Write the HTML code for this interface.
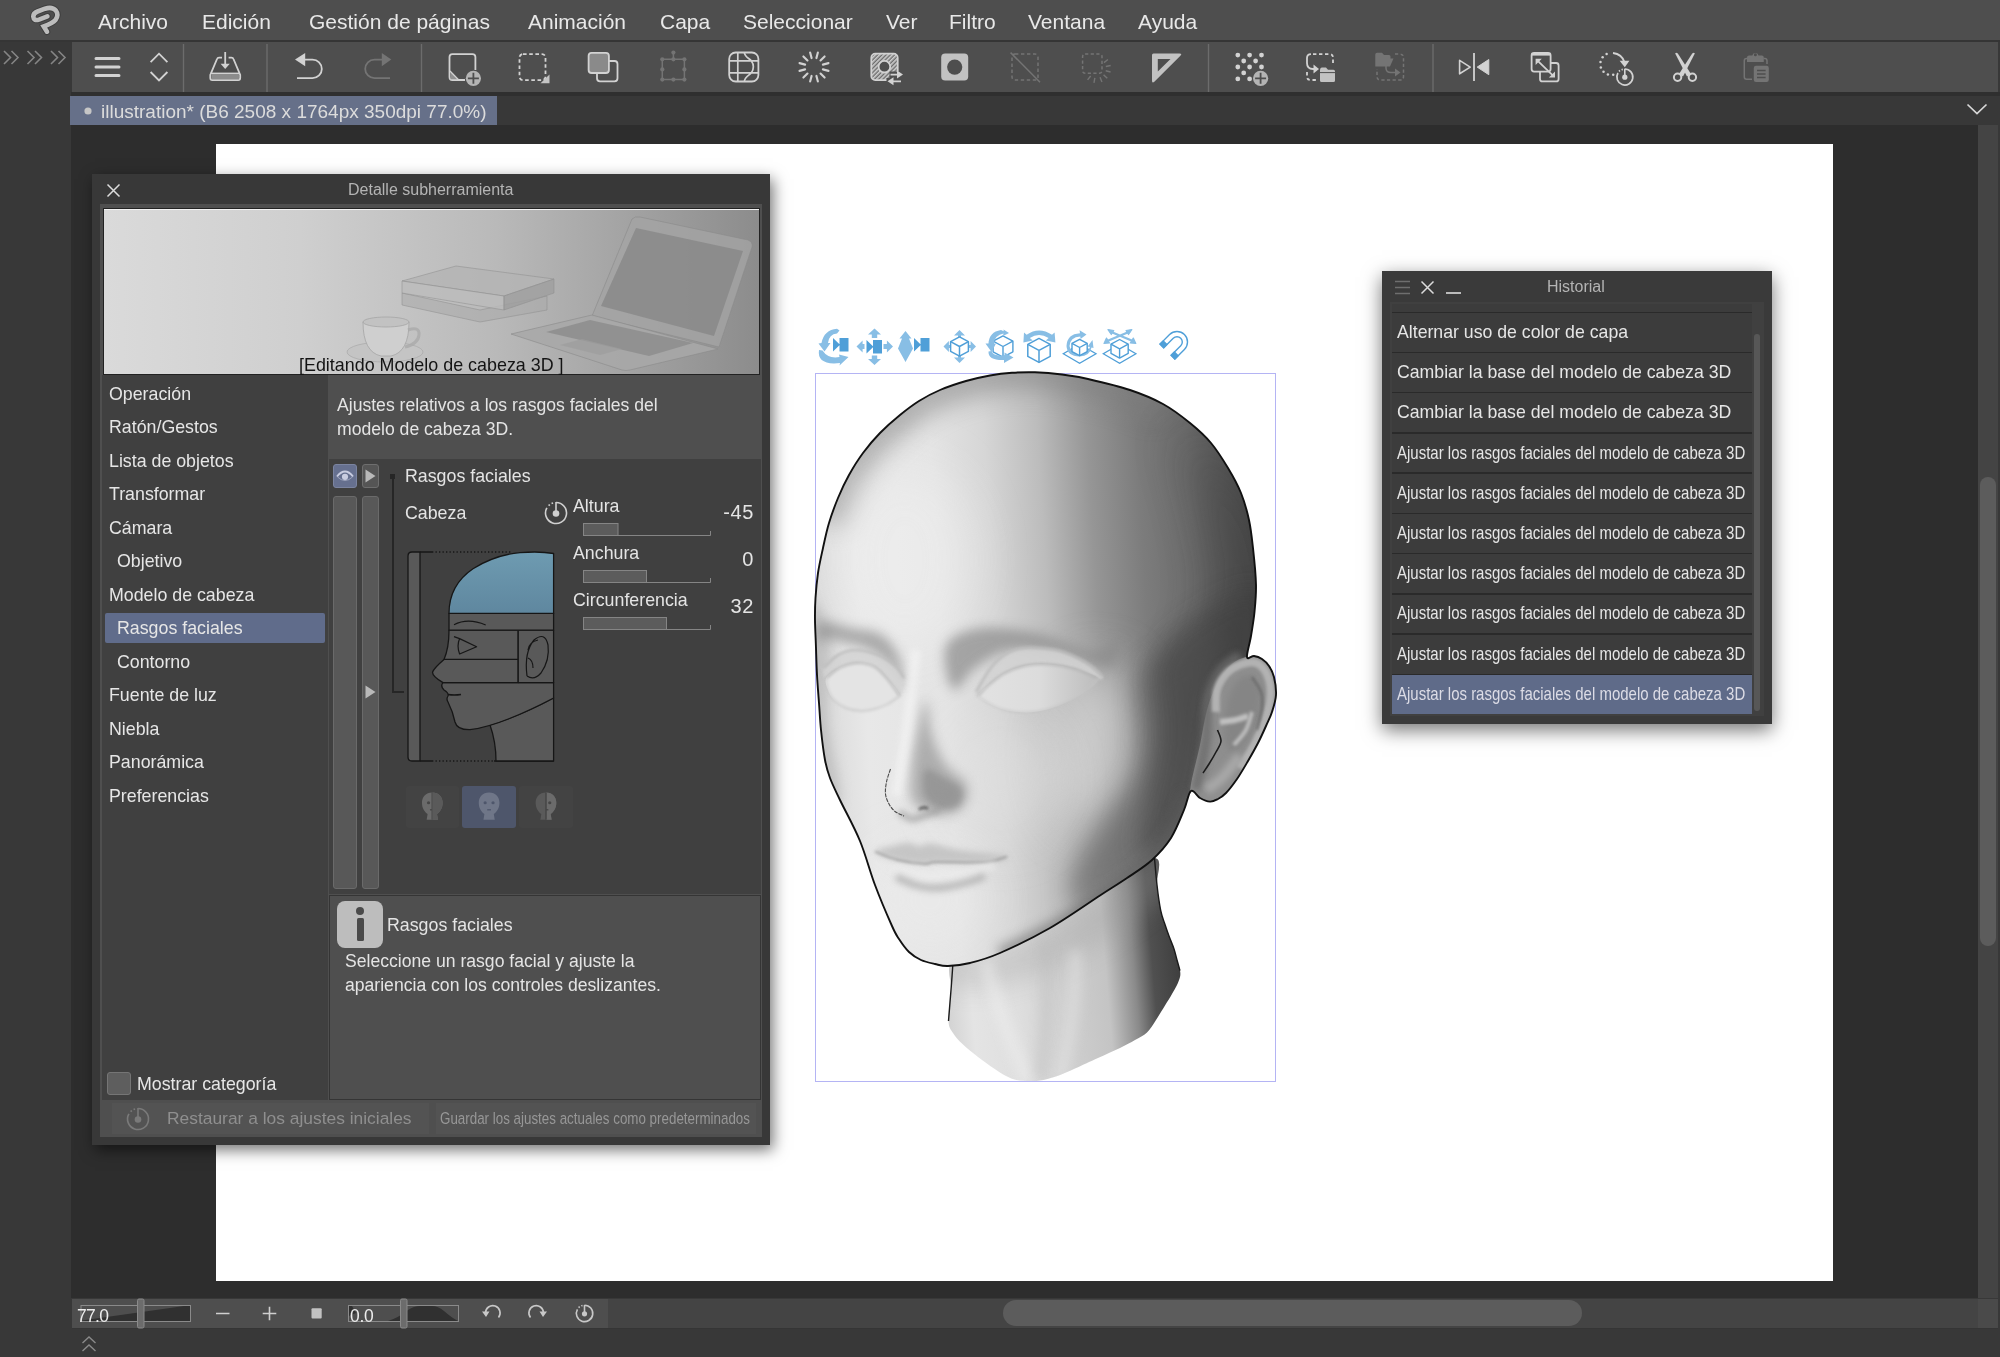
<!DOCTYPE html>
<html lang="es">
<head>
<meta charset="utf-8">
<title>illustration</title>
<style>
*{box-sizing:border-box;margin:0;padding:0}
html,body{width:2000px;height:1357px;overflow:hidden;background:#383838}
body{position:relative;will-change:transform;font-family:"Liberation Sans",sans-serif;color:#e4e4e4;-webkit-font-smoothing:antialiased}
.a{position:absolute}
.t{position:absolute;white-space:nowrap;line-height:1;transform:translateY(-50%)}
svg{position:absolute;overflow:visible}
/* ---- app chrome ---- */
#menubar{left:0;top:0;width:2000px;height:40px;background:#4e4e4e}
#menubar .t{font-size:21px;top:20.5px;color:#e8e8e8}
#menuline{left:0;top:40px;width:2000px;height:2px;background:#353535}
#leftcol{left:0;top:42px;width:71px;height:1315px;background:#383838}
#toolbar{left:72px;top:42px;width:1926px;height:50px;background:#4e4e4e}
#tabbar{left:71px;top:92px;width:1929px;height:33px;background:#383838}
#tab{left:70px;top:96px;width:427px;height:29px;background:#667089}
#tab .t{font-size:19px;color:#dcdcdc;left:31px;top:15px}
#work{left:71px;top:125px;width:1907px;height:1173px;background:#2d2d2d;overflow:hidden}
#paper{left:216px;top:144px;width:1617px;height:1137px;background:#fff}
#vscroll{left:1978px;top:125px;width:20px;height:1193px;background:#444}
#vthumb{left:1980px;top:477px;width:16px;height:469px;border-radius:8px;background:#5c5c5c}
#status{left:72px;top:1298px;width:1926px;height:31px;background:#444;border-top:1px solid #383838;border-bottom:1px solid #353535}
#navi{left:72px;top:1299px;width:536px;height:29px;background:#4e4e4e}
#hthumb{left:1003px;top:1300px;width:579px;height:26px;border-radius:13px;background:#5c5c5c}
#bottom{left:0;top:1329px;width:2000px;height:28px;background:#383838}
</style>
</head>
<body>
<!-- MENU BAR -->
<div id="menubar" class="a">
  <span class="t" style="left:98px">Archivo</span>
  <span class="t" style="left:202px">Edición</span>
  <span class="t" style="left:309px">Gestión de páginas</span>
  <span class="t" style="left:528px">Animación</span>
  <span class="t" style="left:660px">Capa</span>
  <span class="t" style="left:743px">Seleccionar</span>
  <span class="t" style="left:886px">Ver</span>
  <span class="t" style="left:949px">Filtro</span>
  <span class="t" style="left:1028px">Ventana</span>
  <span class="t" style="left:1138px">Ayuda</span>
</div>
<div id="menuline" class="a"></div>
<div id="leftcol" class="a"></div>
<div id="toolbar" class="a"></div>
<div id="tabbar" class="a"></div>
<div class="a" style="left:71px;top:92px;width:1929px;height:3.5px;background:#2f2f2f"></div>
<div id="tab" class="a"><span class="t">illustration* (B6 2508 x 1764px 350dpi 77.0%)</span></div>
<div id="work" class="a"></div>
<div id="paper" class="a"></div>
<div id="vscroll" class="a"></div>
<div id="vthumb" class="a"></div>
<div id="status" class="a"></div>
<div id="navi" class="a"></div>
<div id="hthumb" class="a"></div>
<div id="bottom" class="a"></div>
<div class="a" style="left:1978px;top:1299px;width:20px;height:29px;background:#4a4a4a"></div>
<!--HEAD-START-->
<!-- 3D HEAD -->
<div class="a" style="left:814.5px;top:372.5px;width:461.5px;height:709px;border:1px solid #b4b4f4"></div>
<svg style="left:0;top:0" width="1400" height="1100" viewBox="0 0 1400 1100">
<defs>
<clipPath id="hc"><path d="M1035.0 372.3C1043.3 372.6 1053.2 373.4 1062.0 374.5C1070.8 375.6 1076.7 376.4 1088.0 379.0C1099.3 381.6 1117.5 385.8 1130.0 390.0C1142.5 394.2 1153.0 398.5 1163.0 404.0C1173.0 409.5 1182.0 416.5 1190.0 423.0C1198.0 429.5 1204.7 435.5 1211.0 443.0C1217.3 450.5 1223.0 459.7 1228.0 468.0C1233.0 476.3 1237.5 484.3 1241.0 493.0C1244.5 501.7 1247.0 510.8 1249.0 520.0C1251.0 529.2 1251.8 537.2 1253.0 548.0C1254.2 558.8 1255.8 574.3 1256.0 585.0C1256.2 595.7 1255.3 603.5 1254.5 612.0C1253.7 620.5 1252.2 628.5 1251.0 636.0C1249.8 643.5 1246.5 653.7 1247.0 657.0C1247.5 660.3 1251.5 655.7 1254.0 656.0C1256.5 656.3 1259.5 657.3 1262.0 659.0C1264.5 660.7 1267.0 663.0 1269.0 666.0C1271.0 669.0 1272.8 672.2 1274.0 677.0C1275.2 681.8 1276.3 689.2 1276.0 695.0C1275.7 700.8 1273.7 706.8 1272.0 712.0C1270.3 717.2 1268.3 720.8 1266.0 726.0C1263.7 731.2 1261.0 737.2 1258.0 743.0C1255.0 748.8 1251.5 755.0 1248.0 761.0C1244.5 767.0 1240.7 773.7 1237.0 779.0C1233.3 784.3 1229.2 789.7 1226.0 793.0C1222.8 796.3 1220.7 797.6 1218.0 799.0C1215.3 800.4 1213.0 801.8 1210.0 801.6C1207.0 801.4 1203.2 799.8 1200.0 798.0C1196.8 796.2 1193.7 789.0 1191.0 791.0C1188.3 793.0 1187.3 802.2 1184.0 810.0C1180.7 817.8 1176.3 829.7 1171.0 838.0C1165.7 846.3 1159.3 853.3 1152.0 860.0C1144.7 866.7 1135.7 872.1 1127.0 878.0C1118.3 883.9 1112.8 887.2 1100.0 895.5C1087.2 903.8 1066.7 918.4 1050.0 928.0C1033.3 937.6 1013.3 947.2 1000.0 953.0C986.7 958.8 978.7 960.8 970.0 963.0C961.3 965.2 953.8 965.8 948.0 966.0C942.2 966.2 939.5 965.0 935.0 964.0C930.5 963.0 925.3 962.0 921.0 960.0C916.7 958.0 912.7 955.5 909.0 952.0C905.3 948.5 901.8 943.3 899.0 939.0C896.2 934.7 896.0 935.0 892.0 926.0C888.0 917.0 880.3 899.2 875.0 885.0C869.7 870.8 865.8 855.2 860.0 841.0C854.2 826.8 845.0 810.5 840.0 800.0C835.0 789.5 832.5 784.7 830.0 778.0C827.5 771.3 826.5 768.0 825.0 760.0C823.5 752.0 822.0 739.5 821.0 730.0C820.0 720.5 819.7 712.2 819.0 703.0C818.3 693.8 817.5 684.2 817.0 675.0C816.5 665.8 816.3 657.2 816.0 648.0C815.7 638.8 815.1 628.3 815.0 620.0C814.9 611.7 815.0 605.8 815.5 598.0C816.0 590.2 816.8 581.3 818.0 573.0C819.2 564.7 821.2 556.3 823.0 548.0C824.8 539.7 826.5 531.3 829.0 523.0C831.5 514.7 834.7 506.0 838.0 498.0C841.3 490.0 844.8 482.5 849.0 475.0C853.2 467.5 857.8 460.0 863.0 453.0C868.2 446.0 873.8 439.3 880.0 433.0C886.2 426.7 893.5 420.3 900.0 415.0C906.5 409.7 912.3 405.2 919.0 401.0C925.7 396.8 932.2 393.3 940.0 390.0C947.8 386.7 957.7 383.4 966.0 381.0C974.3 378.6 982.3 376.9 990.0 375.5C997.7 374.1 1004.5 373.3 1012.0 372.8C1019.5 372.3 1026.7 372.0 1035.0 372.3z"/></clipPath>
<clipPath id="nc"><path d="M953.0 960.0C944.8 968.3 951.8 979.8 951.0 990.0C950.2 1000.2 948.2 1013.8 948.5 1021.0C948.8 1028.2 950.7 1029.2 953.0 1033.0C955.3 1036.8 958.3 1040.0 962.5 1044.0C966.7 1048.0 972.8 1052.9 978.0 1057.0C983.2 1061.1 989.3 1065.3 994.0 1068.5C998.7 1071.7 1002.2 1074.1 1006.0 1076.0C1009.8 1077.9 1012.5 1079.2 1016.5 1080.0C1020.5 1080.8 1025.5 1081.0 1030.0 1081.0C1034.5 1081.0 1038.5 1081.0 1043.5 1080.0C1048.5 1079.0 1054.8 1076.9 1060.0 1075.0C1065.2 1073.1 1068.7 1071.3 1075.0 1068.5C1081.3 1065.7 1090.5 1061.4 1098.0 1058.0C1105.5 1054.6 1113.8 1051.0 1120.0 1048.0C1126.2 1045.0 1130.5 1042.6 1135.0 1040.0C1139.5 1037.4 1143.5 1035.8 1147.0 1032.5C1150.5 1029.2 1153.0 1024.5 1156.0 1020.0C1159.0 1015.5 1162.3 1009.8 1165.0 1005.5C1167.7 1001.2 1170.0 997.4 1172.0 994.0C1174.0 990.6 1175.7 987.8 1177.0 985.0C1178.3 982.2 1179.5 979.4 1180.0 977.0C1180.5 974.6 1180.5 973.4 1180.0 970.6C1179.5 967.8 1178.0 963.6 1177.0 960.0C1176.0 956.4 1175.3 953.0 1174.0 949.0C1172.7 945.0 1170.5 940.1 1169.0 936.0C1167.5 931.9 1166.4 928.8 1165.0 924.5C1163.6 920.2 1162.0 917.1 1160.7 910.5C1159.4 903.9 1158.0 893.8 1157.0 885.0C1156.0 876.2 1164.0 858.8 1154.5 858.0C1145.0 857.2 1125.8 866.3 1100.0 880.0C1074.2 893.7 1024.5 926.7 1000.0 940.0C975.5 953.3 961.2 951.7 953.0 960.0z"/></clipPath>
<filter id="b6" filterUnits="userSpaceOnUse" x="700" y="300" width="700" height="850"><feGaussianBlur stdDeviation="6"/></filter>
<filter id="b12" filterUnits="userSpaceOnUse" x="700" y="300" width="700" height="850"><feGaussianBlur stdDeviation="12"/></filter>
<filter id="b25" filterUnits="userSpaceOnUse" x="700" y="300" width="700" height="850"><feGaussianBlur stdDeviation="25"/></filter>
<filter id="b3" filterUnits="userSpaceOnUse" x="700" y="300" width="700" height="850"><feGaussianBlur stdDeviation="3"/></filter>
<filter id="b15" filterUnits="userSpaceOnUse" x="700" y="300" width="700" height="850"><feGaussianBlur stdDeviation="1.5"/></filter>
<linearGradient id="hg" gradientUnits="userSpaceOnUse" x1="818.5" y1="661" x2="1264.6" y2="633.7"><stop offset="0" stop-color="#dadada"/><stop offset=".1" stop-color="#e8e8e8"/><stop offset=".28" stop-color="#e4e4e4"/><stop offset=".4" stop-color="#d6d6d6"/><stop offset=".52" stop-color="#bcbcbc"/><stop offset=".63" stop-color="#969696"/><stop offset=".74" stop-color="#7c7c7c"/><stop offset=".85" stop-color="#6c6c6c"/><stop offset=".95" stop-color="#525252"/><stop offset="1" stop-color="#444"/></linearGradient>
<linearGradient id="ng" gradientUnits="userSpaceOnUse" x1="948" y1="1000" x2="1182" y2="980"><stop offset="0" stop-color="#d4d4d4"/><stop offset=".1" stop-color="#e4e4e4"/><stop offset=".3" stop-color="#dedede"/><stop offset=".5" stop-color="#cfcfcf"/><stop offset=".68" stop-color="#c4c4c4"/><stop offset=".8" stop-color="#8a8a8a"/><stop offset=".88" stop-color="#505050"/><stop offset="1" stop-color="#3e3e3e"/></linearGradient>
<linearGradient id="eg" gradientUnits="userSpaceOnUse" x1="980" y1="0" x2="1098" y2="0"><stop offset="0" stop-color="#e2e2e2"/><stop offset=".5" stop-color="#dcdcdc"/><stop offset="1" stop-color="#bcbcbc"/></linearGradient>
</defs>
<g clip-path="url(#nc)"><rect x="930" y="850" width="270" height="240" fill="url(#ng)"/>
<path d="M940.0 955.0C948.3 948.8 981.7 953.0 1000.0 948.0C1018.3 943.0 1033.3 934.2 1050.0 925.0C1066.7 915.8 1081.7 905.5 1100.0 893.0C1118.3 880.5 1145.0 853.8 1160.0 850.0C1175.0 846.2 1196.7 856.7 1190.0 870.0C1183.3 883.3 1141.7 914.2 1120.0 930.0C1098.3 945.8 1080.0 955.8 1060.0 965.0C1040.0 974.2 1018.3 981.7 1000.0 985.0C981.7 988.3 960.0 990.0 950.0 985.0C940.0 980.0 931.7 961.2 940.0 955.0z" fill="#9a9a9a" opacity=".3" filter="url(#b12)"/>
<path d="M985 960Q1000 1020 1030 1085" stroke="#f0f0f0" stroke-width="14" fill="none" opacity=".5" filter="url(#b6)"/>
<path d="M1075 950Q1078 1010 1060 1080" stroke="#e6e6e6" stroke-width="12" fill="none" opacity=".5" filter="url(#b6)"/>
<path d="M1045 940Q1050 1000 1040 1080" stroke="#b8b8b8" stroke-width="10" fill="none" opacity=".45" filter="url(#b6)"/>
</g>
<path d="M953.0 962.0C952.7 966.7 951.8 980.2 951.0 990.0C950.2 999.8 948.9 1015.8 948.5 1021.0" stroke="#1a1a1a" stroke-width="1.4" fill="none"/>
<path d="M1154.5 858.0C1154.9 862.5 1156.0 876.2 1157.0 885.0C1158.0 893.8 1159.4 903.9 1160.7 910.5C1162.0 917.1 1163.6 920.2 1165.0 924.5C1166.4 928.8 1167.5 931.9 1169.0 936.0C1170.5 940.1 1172.7 945.0 1174.0 949.0C1175.3 953.0 1176.0 956.4 1177.0 960.0C1178.0 963.6 1179.5 968.8 1180.0 970.6" stroke="#1a1a1a" stroke-width="1.4" fill="none"/>
<g clip-path="url(#hc)">
<rect x="800" y="360" width="500" height="620" fill="url(#hg)"/>
<path d="M829.0 523.0C830.5 518.8 834.7 506.0 838.0 498.0C841.3 490.0 844.8 482.5 849.0 475.0C853.2 467.5 857.8 460.0 863.0 453.0C868.2 446.0 873.8 439.3 880.0 433.0C886.2 426.7 893.5 420.3 900.0 415.0C906.5 409.7 912.3 405.2 919.0 401.0C925.7 396.8 932.2 393.3 940.0 390.0C947.8 386.7 957.7 383.4 966.0 381.0C974.3 378.6 982.3 376.9 990.0 375.5C997.7 374.1 1004.5 373.3 1012.0 372.8C1019.5 372.3 1026.7 372.0 1035.0 372.3C1043.3 372.6 1053.2 373.4 1062.0 374.5C1070.8 375.6 1076.7 376.4 1088.0 379.0C1099.3 381.6 1117.5 385.8 1130.0 390.0C1142.5 394.2 1157.5 401.7 1163.0 404.0" stroke="#7e7e7e" stroke-width="34" fill="none" opacity=".55" filter="url(#b12)"/>
<ellipse cx="905" cy="560" rx="70" ry="95" fill="#f0f0f0" opacity=".55" filter="url(#b25)"/>
<path d="M1180.0 430.0C1185.8 426.7 1221.3 458.3 1235.0 480.0C1248.7 501.7 1257.5 530.0 1262.0 560.0C1266.5 590.0 1272.3 623.3 1262.0 660.0C1251.7 696.7 1213.7 773.3 1200.0 780.0C1186.3 786.7 1177.5 730.0 1180.0 700.0C1182.5 670.0 1211.7 633.3 1215.0 600.0C1218.3 566.7 1205.8 528.3 1200.0 500.0C1194.2 471.7 1174.2 433.3 1180.0 430.0z" fill="#3c3c3c" opacity=".45" filter="url(#b25)"/>
<ellipse cx="1092" cy="745" rx="42" ry="85" fill="#dcdcdc" opacity=".75" filter="url(#b25)" transform="rotate(6 1092 745)"/>
<path d="M1138.0 680.0C1142.7 662.2 1155.2 661.7 1168.0 655.0C1180.8 648.3 1208.8 622.5 1215.0 640.0C1221.2 657.5 1214.2 725.0 1205.0 760.0C1195.8 795.0 1180.0 825.8 1160.0 850.0C1140.0 874.2 1100.0 899.7 1085.0 905.0C1070.0 910.3 1067.2 895.8 1070.0 882.0C1072.8 868.2 1090.3 842.0 1102.0 822.0C1113.7 802.0 1134.0 785.7 1140.0 762.0C1146.0 738.3 1133.3 697.8 1138.0 680.0z" fill="#5e5e5e" opacity=".6" filter="url(#b12)"/>
<path d="M1160.0 650.0C1176.2 625.0 1237.5 588.3 1255.0 590.0C1272.5 591.7 1271.2 641.7 1265.0 660.0C1258.8 678.3 1228.2 678.3 1218.0 700.0C1207.8 721.7 1211.7 765.8 1204.0 790.0C1196.3 814.2 1182.7 835.0 1172.0 845.0C1161.3 855.0 1142.3 867.5 1140.0 850.0C1137.7 832.5 1154.7 773.3 1158.0 740.0C1161.3 706.7 1143.8 675.0 1160.0 650.0z" fill="#3a3a3a" opacity=".5" filter="url(#b12)"/>
<ellipse cx="930" cy="900" rx="60" ry="55" fill="#ececec" opacity=".6" filter="url(#b25)"/>
<ellipse cx="1000" cy="780" rx="55" ry="60" fill="#e2e2e2" opacity=".5" filter="url(#b25)"/>
<path d="M812.0 600.0C816.2 598.3 827.3 620.0 830.0 640.0C832.7 660.0 826.3 693.3 828.0 720.0C829.7 746.7 842.2 786.7 840.0 800.0C837.8 813.3 820.8 825.0 815.0 800.0C809.2 775.0 805.5 683.3 805.0 650.0C804.5 616.7 807.8 601.7 812.0 600.0z" fill="#a8a8a8" opacity=".5" filter="url(#b6)"/>
<path d="M820.0 622.0C825.3 620.0 840.0 626.0 850.0 628.0C860.0 630.0 872.0 629.5 880.0 634.0C888.0 638.5 893.8 645.7 898.0 655.0C902.2 664.3 906.0 687.8 905.0 690.0C904.0 692.2 897.8 674.7 892.0 668.0C886.2 661.3 879.5 654.7 870.0 650.0C860.5 645.3 843.7 641.7 835.0 640.0C826.3 638.3 820.5 643.0 818.0 640.0C815.5 637.0 814.7 624.0 820.0 622.0z" fill="#8e8e8e" opacity=".7" filter="url(#b6)"/>
<path d="M950.0 640.0C956.7 633.8 970.0 629.0 985.0 628.0C1000.0 627.0 1022.5 630.3 1040.0 634.0C1057.5 637.7 1076.7 649.0 1090.0 650.0C1103.3 651.0 1116.7 637.0 1120.0 640.0C1123.3 643.0 1120.0 666.0 1110.0 668.0C1100.0 670.0 1076.7 655.0 1060.0 652.0C1043.3 649.0 1024.2 647.3 1010.0 650.0C995.8 652.7 984.2 661.3 975.0 668.0C965.8 674.7 960.0 690.5 955.0 690.0C950.0 689.5 945.8 673.3 945.0 665.0C944.2 656.7 943.3 646.2 950.0 640.0z" fill="#8a8a8a" opacity=".7" filter="url(#b6)"/>
<path d="M926.0 700.0C928.3 700.8 928.7 724.2 932.0 735.0C935.3 745.8 940.3 757.0 946.0 765.0C951.7 773.0 962.8 776.7 966.0 783.0C969.2 789.3 967.7 797.8 965.0 803.0C962.3 808.2 955.8 812.5 950.0 814.0C944.2 815.5 936.3 814.3 930.0 812.0C923.7 809.7 915.0 807.8 912.0 800.0C909.0 792.2 911.0 776.7 912.0 765.0C913.0 753.3 915.7 740.8 918.0 730.0C920.3 719.2 923.7 699.2 926.0 700.0z" fill="#8c8c8c" opacity=".62" filter="url(#b6)"/>
<path d="M925.0 770.0C928.3 767.0 938.8 774.7 945.0 778.0C951.2 781.3 959.8 785.3 962.0 790.0C964.2 794.7 961.7 803.0 958.0 806.0C954.3 809.0 945.5 809.7 940.0 808.0C934.5 806.3 927.5 802.3 925.0 796.0C922.5 789.7 921.7 773.0 925.0 770.0z" fill="#868686" opacity=".55" filter="url(#b3)"/>
<path d="M899.0 812.0C901.2 813.2 907.2 818.7 912.0 819.0C916.8 819.3 923.3 815.5 928.0 814.0C932.7 812.5 938.0 810.7 940.0 810.0" stroke="#909090" stroke-width="6" fill="none" opacity=".65" filter="url(#b3)"/>
<path d="M916 650Q908 730 896 796" stroke="#f3f3f3" stroke-width="10" fill="none" opacity=".75" filter="url(#b3)"/>
<path d="M824.0 668.0C826.0 664.1 832.8 658.0 838.0 655.0C843.2 652.0 848.3 650.0 855.0 650.0C861.7 650.0 871.3 652.3 878.0 655.0C884.7 657.7 890.7 662.2 895.0 666.0C899.3 669.8 903.2 673.0 904.0 678.0C904.8 683.0 902.3 695.7 899.6 696.0C896.9 696.3 892.1 684.8 888.0 680.0C883.9 675.2 879.7 669.8 875.0 667.0C870.3 664.2 864.5 663.4 860.0 663.0C855.5 662.6 852.0 663.3 848.0 664.5C844.0 665.7 839.7 667.7 836.0 670.0C832.3 672.3 828.0 678.8 826.0 678.5C824.0 678.2 822.0 671.9 824.0 668.0z" fill="#d4d4d4" opacity=".85" filter="url(#b15)"/>
<path d="M824.0 668.0C826.3 665.8 832.8 658.0 838.0 655.0C843.2 652.0 848.3 650.0 855.0 650.0C861.7 650.0 871.3 652.3 878.0 655.0C884.7 657.7 890.7 662.2 895.0 666.0C899.3 669.8 902.5 676.0 904.0 678.0" stroke="#b8b8b8" stroke-width="2.2" fill="none" filter="url(#b15)"/>
<path d="M826.0 678.5C827.3 675.2 832.3 672.3 836.0 670.0C839.7 667.7 844.0 665.7 848.0 664.5C852.0 663.3 855.5 662.6 860.0 663.0C864.5 663.4 870.3 664.2 875.0 667.0C879.7 669.8 883.9 675.2 888.0 680.0C892.1 684.8 899.6 692.0 899.6 696.0C899.6 700.0 892.1 701.8 888.0 704.0C883.9 706.2 879.5 707.8 875.0 709.0C870.5 710.2 865.8 711.2 861.0 711.0C856.2 710.8 850.5 709.8 846.0 708.0C841.5 706.2 837.0 703.0 834.0 700.0C831.0 697.0 829.3 693.6 828.0 690.0C826.7 686.4 824.7 681.8 826.0 678.5z" fill="#e4e4e4"/>
<path d="M826.0 678.5C827.7 677.1 832.3 672.3 836.0 670.0C839.7 667.7 844.0 665.7 848.0 664.5C852.0 663.3 855.5 662.6 860.0 663.0C864.5 663.4 870.3 664.2 875.0 667.0C879.7 669.8 883.9 675.2 888.0 680.0C892.1 684.8 897.7 693.3 899.6 696.0" stroke="#adadad" stroke-width="1.6" fill="none" filter="url(#b15)"/>
<path d="M899.6 696.0C897.7 697.3 892.1 701.8 888.0 704.0C883.9 706.2 879.5 707.8 875.0 709.0C870.5 710.2 865.8 711.2 861.0 711.0C856.2 710.8 850.5 709.8 846.0 708.0C841.5 706.2 837.0 703.0 834.0 700.0C831.0 697.0 829.3 693.6 828.0 690.0C826.7 686.4 826.3 680.4 826.0 678.5" stroke="#c4c4c4" stroke-width="1.4" fill="none" filter="url(#b15)"/>
<path d="M976.0 692.0C978.7 686.7 987.0 671.2 994.0 664.0C1001.0 656.8 1007.7 651.3 1018.0 649.0C1028.3 646.7 1044.8 647.8 1056.0 650.0C1067.2 652.2 1077.3 657.7 1085.0 662.0C1092.7 666.3 1099.8 673.2 1102.0 676.0C1104.2 678.8 1102.5 679.7 1098.0 678.5C1093.5 677.3 1083.0 671.3 1075.0 669.0C1067.0 666.7 1058.2 665.1 1050.0 664.5C1041.8 663.9 1033.5 664.1 1026.0 665.5C1018.5 666.9 1011.0 669.9 1005.0 673.0C999.0 676.1 994.5 680.2 990.0 684.0C985.5 687.8 980.3 694.7 978.0 696.0C975.7 697.3 973.3 697.3 976.0 692.0z" fill="#d4d4d4" opacity=".85" filter="url(#b15)"/>
<path d="M976.0 692.0C979.0 687.3 987.0 671.2 994.0 664.0C1001.0 656.8 1007.7 651.3 1018.0 649.0C1028.3 646.7 1044.8 647.8 1056.0 650.0C1067.2 652.2 1077.3 657.7 1085.0 662.0C1092.7 666.3 1099.2 673.7 1102.0 676.0" stroke="#b8b8b8" stroke-width="2.2" fill="none" filter="url(#b15)"/>
<path d="M978.0 696.0C978.0 692.7 985.5 687.8 990.0 684.0C994.5 680.2 999.0 676.1 1005.0 673.0C1011.0 669.9 1018.5 666.9 1026.0 665.5C1033.5 664.1 1041.8 663.9 1050.0 664.5C1058.2 665.1 1067.0 666.7 1075.0 669.0C1083.0 671.3 1096.3 674.7 1098.0 678.5C1099.7 682.3 1090.5 687.9 1085.0 692.0C1079.5 696.1 1071.7 700.0 1065.0 703.0C1058.3 706.0 1051.5 708.4 1045.0 710.0C1038.5 711.6 1032.7 712.5 1026.0 712.5C1019.3 712.5 1011.0 711.4 1005.0 710.0C999.0 708.6 994.5 706.3 990.0 704.0C985.5 701.7 978.0 699.3 978.0 696.0z" fill="url(#eg)"/>
<path d="M978.0 696.0C980.0 694.0 985.5 687.8 990.0 684.0C994.5 680.2 999.0 676.1 1005.0 673.0C1011.0 669.9 1018.5 666.9 1026.0 665.5C1033.5 664.1 1041.8 663.9 1050.0 664.5C1058.2 665.1 1067.0 666.7 1075.0 669.0C1083.0 671.3 1094.2 676.9 1098.0 678.5" stroke="#adadad" stroke-width="1.6" fill="none" filter="url(#b15)"/>
<path d="M1098.0 678.5C1095.8 680.8 1090.5 687.9 1085.0 692.0C1079.5 696.1 1071.7 700.0 1065.0 703.0C1058.3 706.0 1051.5 708.4 1045.0 710.0C1038.5 711.6 1032.7 712.5 1026.0 712.5C1019.3 712.5 1011.0 711.4 1005.0 710.0C999.0 708.6 994.5 706.3 990.0 704.0C985.5 701.7 980.0 697.3 978.0 696.0" stroke="#c4c4c4" stroke-width="1.4" fill="none" filter="url(#b15)"/>
<path d="M890.5 769.0C889.8 771.2 887.3 777.8 886.5 782.0C885.7 786.2 885.1 790.3 885.5 794.0C885.9 797.7 887.4 801.1 889.0 804.0C890.6 806.9 892.5 809.5 895.0 811.5C897.5 813.5 902.5 815.2 904.0 816.0" stroke="#4a4a4a" stroke-width="1.1" fill="none" stroke-dasharray="4 1"/>
<path d="M919 809.5Q923 806 928 808.5" stroke="#3a3a3a" stroke-width="2" fill="none" filter="url(#b15)"/>
<path d="M875.0 851.5C874.2 849.2 886.5 847.5 892.0 846.0C897.5 844.5 903.4 842.7 908.0 842.7C912.6 842.7 915.7 845.9 919.5 846.0C923.3 846.1 924.2 842.8 931.0 843.5C937.8 844.2 947.3 847.8 960.0 850.0C972.7 852.2 1002.7 854.5 1007.0 856.5C1011.3 858.5 997.7 861.0 986.0 862.0C974.3 863.0 947.3 862.2 937.0 862.5C926.7 862.8 930.7 864.4 924.0 864.0C917.3 863.6 905.2 862.1 897.0 860.0C888.8 857.9 875.8 853.8 875.0 851.5z" fill="#bdbdbd" opacity=".8" filter="url(#b3)"/>
<path d="M875.0 851.6C878.7 853.0 888.8 857.7 897.0 859.7C905.2 861.7 917.3 863.3 924.0 863.7C930.7 864.1 926.7 862.4 937.0 862.1C947.3 861.8 974.3 863.0 986.0 862.1C997.7 861.2 1003.5 857.4 1007.0 856.5" stroke="#8e8e8e" stroke-width="1.5" fill="none" filter="url(#b15)"/>
<path d="M890.0 868.0C895.0 869.3 908.3 875.0 920.0 876.0C931.7 877.0 947.5 875.8 960.0 874.0C972.5 872.2 989.2 866.5 995.0 865.0" stroke="#ececec" stroke-width="8" fill="none" opacity=".7" filter="url(#b3)"/>
<path d="M896.0 877.0C899.2 878.3 909.2 883.2 915.0 885.0C920.8 886.8 925.2 887.8 931.0 888.0C936.8 888.2 943.5 887.6 950.0 886.5C956.5 885.4 964.2 883.2 970.0 881.5C975.8 879.8 982.5 876.9 985.0 876.0" stroke="#a6a6a6" stroke-width="7" fill="none" opacity=".7" filter="url(#b3)"/>
<path d="M1000.0 955.0C1010.0 950.0 1040.0 936.7 1060.0 925.0C1080.0 913.3 1102.5 898.3 1120.0 885.0C1137.5 871.7 1153.3 860.0 1165.0 845.0C1176.7 830.0 1185.8 803.3 1190.0 795.0" stroke="#5a5a5a" stroke-width="16" fill="none" opacity=".5" filter="url(#b6)"/>
<path d="M1190.0 796.0C1189.0 786.0 1196.7 761.0 1200.0 745.0C1203.3 729.0 1205.3 712.8 1210.0 700.0C1214.7 687.2 1222.0 675.2 1228.0 668.0C1234.0 660.8 1240.0 658.7 1246.0 657.0C1252.0 655.3 1258.7 651.7 1264.0 658.0C1269.3 664.3 1278.0 681.3 1278.0 695.0C1278.0 708.7 1272.3 723.2 1264.0 740.0C1255.7 756.8 1237.7 785.2 1228.0 796.0C1218.3 806.8 1212.3 805.0 1206.0 805.0C1199.7 805.0 1191.0 806.0 1190.0 796.0z" fill="#8e8e8e"/>
<path d="M1240.0 655.0C1236.7 657.8 1225.3 664.5 1220.0 672.0C1214.7 679.5 1210.3 688.7 1208.0 700.0C1205.7 711.3 1208.0 725.0 1206.0 740.0C1204.0 755.0 1197.7 781.7 1196.0 790.0" stroke="#6a6a6a" stroke-width="10" fill="none" opacity=".8" filter="url(#b3)"/>
<path d="M1216.0 712.0C1216.2 708.3 1215.0 696.7 1217.0 690.0C1219.0 683.3 1223.2 676.5 1228.0 672.0C1232.8 667.5 1240.7 664.2 1246.0 663.0C1251.3 661.8 1256.2 662.2 1260.0 665.0C1263.8 667.8 1267.3 674.2 1269.0 680.0C1270.7 685.8 1270.8 693.0 1270.0 700.0C1269.2 707.0 1266.7 714.5 1264.0 722.0C1261.3 729.5 1258.0 737.3 1254.0 745.0C1250.0 752.7 1242.3 764.2 1240.0 768.0" stroke="#b2b2b2" stroke-width="8" fill="none" filter="url(#b15)"/>
<path d="M1228.0 700.0C1230.3 690.8 1234.0 684.0 1238.0 680.0C1242.0 676.0 1248.3 674.3 1252.0 676.0C1255.7 677.7 1259.0 683.5 1260.0 690.0C1261.0 696.5 1260.3 706.7 1258.0 715.0C1255.7 723.3 1250.3 733.8 1246.0 740.0C1241.7 746.2 1235.7 752.8 1232.0 752.0C1228.3 751.2 1224.7 743.7 1224.0 735.0C1223.3 726.3 1225.7 709.2 1228.0 700.0z" fill="#858585" filter="url(#b3)"/>
<path d="M1252.0 677.0C1253.5 679.5 1259.3 686.8 1261.0 692.0C1262.7 697.2 1262.7 701.7 1262.0 708.0C1261.3 714.3 1257.8 726.3 1257.0 730.0" stroke="#5a5a5a" stroke-width="1.6" fill="none" filter="url(#b15)"/>
<path d="M1220.0 722.0C1222.5 721.7 1230.3 721.0 1235.0 720.0C1239.7 719.0 1245.8 716.7 1248.0 716.0" stroke="#c0c0c0" stroke-width="6" fill="none" filter="url(#b15)"/>
<path d="M1234.0 745.0C1236.0 742.5 1243.0 735.5 1246.0 730.0C1249.0 724.5 1251.0 715.0 1252.0 712.0" stroke="#bdbdbd" stroke-width="4" fill="none" filter="url(#b15)"/>
<path d="M1206.0 790.0C1208.7 788.0 1216.3 783.7 1222.0 778.0C1227.7 772.3 1237.0 759.7 1240.0 756.0" stroke="#a8a8a8" stroke-width="10" fill="none" filter="url(#b3)"/>
<path d="M1217.5 730.0C1218.1 731.8 1221.2 737.3 1221.0 741.0C1220.8 744.7 1218.0 748.2 1216.0 752.0C1214.0 755.8 1211.2 760.5 1209.0 764.0C1206.8 767.5 1204.0 771.5 1203.0 773.0" stroke="#1c1c1c" stroke-width="1.6" fill="none"/>
</g>
<path d="M1035.0 372.3C1043.3 372.6 1053.2 373.4 1062.0 374.5C1070.8 375.6 1076.7 376.4 1088.0 379.0C1099.3 381.6 1117.5 385.8 1130.0 390.0C1142.5 394.2 1153.0 398.5 1163.0 404.0C1173.0 409.5 1182.0 416.5 1190.0 423.0C1198.0 429.5 1204.7 435.5 1211.0 443.0C1217.3 450.5 1223.0 459.7 1228.0 468.0C1233.0 476.3 1237.5 484.3 1241.0 493.0C1244.5 501.7 1247.0 510.8 1249.0 520.0C1251.0 529.2 1251.8 537.2 1253.0 548.0C1254.2 558.8 1255.8 574.3 1256.0 585.0C1256.2 595.7 1255.3 603.5 1254.5 612.0C1253.7 620.5 1252.2 628.5 1251.0 636.0C1249.8 643.5 1246.5 653.7 1247.0 657.0C1247.5 660.3 1251.5 655.7 1254.0 656.0C1256.5 656.3 1259.5 657.3 1262.0 659.0C1264.5 660.7 1267.0 663.0 1269.0 666.0C1271.0 669.0 1272.8 672.2 1274.0 677.0C1275.2 681.8 1276.3 689.2 1276.0 695.0C1275.7 700.8 1273.7 706.8 1272.0 712.0C1270.3 717.2 1268.3 720.8 1266.0 726.0C1263.7 731.2 1261.0 737.2 1258.0 743.0C1255.0 748.8 1251.5 755.0 1248.0 761.0C1244.5 767.0 1240.7 773.7 1237.0 779.0C1233.3 784.3 1229.2 789.7 1226.0 793.0C1222.8 796.3 1220.7 797.6 1218.0 799.0C1215.3 800.4 1213.0 801.8 1210.0 801.6C1207.0 801.4 1203.2 799.8 1200.0 798.0C1196.8 796.2 1193.7 789.0 1191.0 791.0C1188.3 793.0 1187.3 802.2 1184.0 810.0C1180.7 817.8 1176.3 829.7 1171.0 838.0C1165.7 846.3 1159.3 853.3 1152.0 860.0C1144.7 866.7 1135.7 872.1 1127.0 878.0C1118.3 883.9 1112.8 887.2 1100.0 895.5C1087.2 903.8 1066.7 918.4 1050.0 928.0C1033.3 937.6 1013.3 947.2 1000.0 953.0C986.7 958.8 978.7 960.8 970.0 963.0C961.3 965.2 953.8 965.8 948.0 966.0C942.2 966.2 939.5 965.0 935.0 964.0C930.5 963.0 925.3 962.0 921.0 960.0C916.7 958.0 912.7 955.5 909.0 952.0C905.3 948.5 901.8 943.3 899.0 939.0C896.2 934.7 896.0 935.0 892.0 926.0C888.0 917.0 880.3 899.2 875.0 885.0C869.7 870.8 865.8 855.2 860.0 841.0C854.2 826.8 845.0 810.5 840.0 800.0C835.0 789.5 832.5 784.7 830.0 778.0C827.5 771.3 826.5 768.0 825.0 760.0C823.5 752.0 822.0 739.5 821.0 730.0C820.0 720.5 819.7 712.2 819.0 703.0C818.3 693.8 817.5 684.2 817.0 675.0C816.5 665.8 816.3 657.2 816.0 648.0C815.7 638.8 815.1 628.3 815.0 620.0C814.9 611.7 815.0 605.8 815.5 598.0C816.0 590.2 816.8 581.3 818.0 573.0C819.2 564.7 821.2 556.3 823.0 548.0C824.8 539.7 826.5 531.3 829.0 523.0C831.5 514.7 834.7 506.0 838.0 498.0C841.3 490.0 844.8 482.5 849.0 475.0C853.2 467.5 857.8 460.0 863.0 453.0C868.2 446.0 873.8 439.3 880.0 433.0C886.2 426.7 893.5 420.3 900.0 415.0C906.5 409.7 912.3 405.2 919.0 401.0C925.7 396.8 932.2 393.3 940.0 390.0C947.8 386.7 957.7 383.4 966.0 381.0C974.3 378.6 982.3 376.9 990.0 375.5C997.7 374.1 1004.5 373.3 1012.0 372.8C1019.5 372.3 1026.7 372.0 1035.0 372.3z" fill="none" stroke="#111" stroke-width="1.9" stroke-linejoin="round"/>
</svg>
<!--HEAD-END-->
<!--DIALOG-START-->
<!-- SUB TOOL DETAIL DIALOG -->
<div class="a" id="dlg" style="left:92px;top:174px;width:678px;height:971px;background:#383838;box-shadow:3px 5px 14px rgba(0,0,0,.55)"></div>
<svg style="left:107px;top:184px" width="13" height="13" viewBox="0 0 13 13"><path d="M0.5 0.5L12.5 12.5M12.5 0.5L0.5 12.5" stroke="#dcdcdc" stroke-width="1.5" fill="none"/></svg>
<span class="t" style="left:348px;top:190px;font-size:16px;color:#b4b4b4">Detalle subherramienta</span>
<div class="a" style="left:100px;top:204px;width:662px;height:933px;background:#4f4f4f"></div>
<!-- preview -->
<div class="a" style="left:103px;top:208px;width:657px;height:167px;background:#222"></div>
<div class="a" id="prev" style="left:104px;top:209px;width:655px;height:165px;background:linear-gradient(90deg,#dadada 0%,#cfcfcf 30%,#b9b9b9 60%,#9a9a9a 88%,#8c8c8c 100%);border-top:1px solid #f2f2f2;overflow:hidden">
<svg style="left:-104px;top:-210px" width="760" height="380" viewBox="0 0 760 380">
  <!-- books -->
  <g stroke="#8f8f8f" stroke-width="1" stroke-opacity=".55">
  <path d="M402 305l78 17 67-12v-14l-67 14-78-17z" fill="#a9a9a9" fill-opacity=".55"/>
  <path d="M402 281l54-15 98 13-50 17z" fill="#b4b4b4" fill-opacity=".8"/>
  <path d="M402 281l102 15v14l-102-17z" fill="#bcbcbc" fill-opacity=".8"/>
  <path d="M504 296l50-17v14l-50 17z" fill="#9f9f9f" fill-opacity=".8"/>
  </g>
  <!-- cup -->
  <ellipse cx="385" cy="352" rx="38" ry="10" fill="#c4c4c4" stroke="#a8a8a8" stroke-opacity=".7"/>
  <path d="M363 322q0 30 18 34h10q18-4 18-34z" fill="#cfcfcf" stroke="#a5a5a5" stroke-opacity=".8"/>
  <ellipse cx="386" cy="322" rx="23" ry="5" fill="#c2c2c2" stroke="#a5a5a5" stroke-opacity=".8"/>
  <path d="M408 330q12-4 11 5t-14 12" fill="none" stroke="#aaa" stroke-width="3" stroke-opacity=".8"/>
  <!-- laptop -->
  <g stroke="#8a8a8a" stroke-opacity=".6">
  <path d="M632 219q3-3 8-2l108 23q5 2 4 7l-33 100-127-31z" fill="#a4a4a4" fill-opacity=".8"/>
  <path d="M636 228l107 23-29 85-113-30z" fill="#858585" fill-opacity=".75" stroke="none"/>
  <path d="M511 334l81-19 126 34-88 21q-4 1-8 0z" fill="#a8a8a8" fill-opacity=".85"/>
  <path d="M546 332l44-12 103 23-44 13z" fill="#8a8a8a" fill-opacity=".75" stroke="none"/>
  <path d="M560 345l22-6 40 10-22 6z" fill="#9c9c9c" fill-opacity=".7" stroke="none"/>
  </g>
</svg>
</div>
<span class="t" style="left:299px;top:366px;font-size:17.9px;color:#141414">[Editando Modelo de cabeza 3D ]</span>
<!-- category list -->
<div class="a" style="left:102px;top:375px;width:226px;height:725px;background:#404040"></div>
<div class="a" style="left:105px;top:613px;width:220px;height:30px;background:#606c8b;border-radius:2px"></div>
<div id="cats" style="font-size:17.8px;color:#e6e6e6">
<span class="t" style="left:109px;top:395px">Operación</span>
<span class="t" style="left:109px;top:428px">Ratón/Gestos</span>
<span class="t" style="left:109px;top:462px">Lista de objetos</span>
<span class="t" style="left:109px;top:495px">Transformar</span>
<span class="t" style="left:109px;top:529px">Cámara</span>
<span class="t" style="left:117px;top:562px">Objetivo</span>
<span class="t" style="left:109px;top:596px">Modelo de cabeza</span>
<span class="t" style="left:117px;top:629px">Rasgos faciales</span>
<span class="t" style="left:117px;top:663px">Contorno</span>
<span class="t" style="left:109px;top:696px">Fuente de luz</span>
<span class="t" style="left:109px;top:730px">Niebla</span>
<span class="t" style="left:109px;top:763px">Panorámica</span>
<span class="t" style="left:109px;top:797px">Preferencias</span>
<span class="t" style="left:137px;top:1085px">Mostrar categoría</span>
</div>
<div class="a" style="left:107px;top:1072px;width:24px;height:23px;background:#5e5e5e;border:1px solid #757575;border-radius:3px"></div>
<!-- description -->
<div class="a" style="left:328px;top:375px;width:434px;height:84px;background:#4f4f4f"></div>
<span class="t" style="left:337px;top:406px;font-size:17.6px">Ajustes relativos a los rasgos faciales del</span>
<span class="t" style="left:337px;top:430px;font-size:17.6px">modelo de cabeza 3D.</span>
<!-- settings -->
<div class="a" style="left:329px;top:459px;width:432px;height:435px;background:#404040"></div>
<div class="a" style="left:333px;top:464px;width:24px;height:24px;background:#66708f;border-radius:3px;border:1px solid #7b84a0"></div>
<svg style="left:336px;top:468px" width="18" height="16" viewBox="0 0 18 16"><path d="M1 8.5Q9 -1.5 17 8.5" fill="none" stroke="#c9cde0" stroke-width="2"/><path d="M1.5 9Q9 16 16.5 9" fill="none" stroke="#c9cde0" stroke-width="1" opacity=".55"/><circle cx="9" cy="8.8" r="3.1" fill="#c9cde0"/></svg>
<div class="a" style="left:362px;top:464px;width:17px;height:24px;background:#555;border-radius:3px;border:1px solid #6e6e6e"></div>
<svg style="left:365px;top:469px" width="11" height="14" viewBox="0 0 11 14"><path d="M0.5 0.5L10.5 7L0.5 13.5z" fill="#b9b9b9"/></svg>
<div class="a" style="left:333px;top:496px;width:24px;height:393px;background:#585858;border-radius:3px;border:1px solid #6a6a6a"></div>
<div class="a" style="left:362px;top:496px;width:17px;height:393px;background:#585858;border-radius:3px;border:1px solid #6a6a6a"></div>
<svg style="left:365px;top:685px" width="11" height="14" viewBox="0 0 11 14"><path d="M0.5 0.5L10.5 7L0.5 13.5z" fill="#b9b9b9"/></svg>
<!-- tree -->
<div class="a" style="left:390px;top:474px;width:5px;height:5px;background:#262626"></div>
<div class="a" style="left:392px;top:476px;width:2px;height:217px;background:#262626"></div>
<div class="a" style="left:392px;top:691px;width:12px;height:2px;background:#262626"></div>
<span class="t" style="left:405px;top:477px;font-size:17.8px">Rasgos faciales</span>
<span class="t" style="left:405px;top:514px;font-size:17.8px">Cabeza</span>
<svg style="left:543px;top:500px" width="26" height="26" viewBox="0 0 26 26"><path d="M13 2.5A10.5 10.5 0 1 1 3.9 7.8" fill="none" stroke="#d0d0d0" stroke-width="1.6"/><path d="M5.6 5.6A10.5 10.5 0 0 1 10.5 2.8" fill="none" stroke="#d0d0d0" stroke-width="1.6" stroke-dasharray="1.6 2"/><path d="M13 2v10" stroke="#d0d0d0" stroke-width="1.6"/><circle cx="13" cy="13.5" r="3.3" fill="#d0d0d0"/></svg>
<span class="t" style="left:573px;top:507px;font-size:17.8px">Altura</span>
<span class="t" style="left:573px;top:554px;font-size:17.8px">Anchura</span>
<span class="t" style="left:573px;top:601px;font-size:17.8px">Circunferencia</span>
<span class="t" style="right:1246px;top:511.5px;font-size:20px;letter-spacing:.6px">-45</span>
<span class="t" style="right:1246px;top:558.5px;font-size:20px;letter-spacing:.6px">0</span>
<span class="t" style="right:1246px;top:605.5px;font-size:20px;letter-spacing:.6px">32</span>
<svg style="left:0;top:0" width="800" height="700" viewBox="0 0 800 700">
 <g fill="#5c5c5c" stroke="#858585" stroke-width="1">
  <rect x="583.5" y="523.5" width="34.5" height="12"/><path d="M583.5 535.5H710.5V531" fill="none"/>
  <rect x="583.5" y="570.5" width="63" height="12"/><path d="M583.5 582.5H710.5V578" fill="none"/>
  <rect x="583.5" y="617.5" width="83" height="12"/><path d="M583.5 629.5H710.5V625" fill="none"/>
 </g>
</svg>
<svg style="left:0;top:0" width="800" height="900" viewBox="0 0 800 900">
 <defs><linearGradient id="hb" x1="0" y1="0" x2="0" y2="1"><stop offset="0" stop-color="#6e9bb1"/><stop offset="1" stop-color="#5f879f"/></linearGradient></defs>
 <g stroke="#161616" stroke-width="1.3" stroke-linejoin="round" fill="#595959">
  <path d="M420 552H412Q408 552 408 556V757Q408 761 412 761H420Z"/>
  <path d="M420 552H432M420 761H432M494 761H553.6" fill="none"/>
  <path d="M432 552H512M432 761H494" fill="none" stroke-dasharray="1.3 2.2"/>
  <!-- neck -->
  <path d="M490 725Q496 742 496 761H553.6V698Q520 716 490 725Z"/>
  <!-- lower face -->
  <path d="M443 682.6Q440 686 444 690Q449 693 448 696Q446 699 448 702Q453 712 455 722Q457 730 470 729.7Q500 726 553.6 698V682.6Z"/>
  <path d="M448 694.5Q454 695.5 461 694.5" fill="none"/>
  <!-- nose band -->
  <path d="M444 659.4Q434 668 432.6 672Q432 676 443 682.6H518.2V659.4Z"/>
  <!-- eye band -->
  <path d="M449 630.2Q449 648 444 659.4H518.2V630.2Z"/>
  <!-- ear box -->
  <rect x="518.2" y="630.2" width="35.4" height="52.4"/>
  <!-- brow band -->
  <path d="M449 613.4V630.2H553.6V613.4Z"/>
  <!-- blue -->
  <path d="M449 613.4Q449 585 473 568.7Q495 555 520 552.6Q540 551 553.6 553.5V613.4Z" fill="url(#hb)"/>
  <g fill="none" stroke-width="1.2">
   <path d="M454 624.7Q468 617.5 485.7 625"/>
   <path d="M454 636.6L459.6 638.6L476.6 646.8L459.6 654Q456.5 646 459.6 638.6"/>
   <path d="M527 676Q524 652 534 640Q545 631 548 645Q550 660 541 673Q534 681 527 676M528 650Q529 642 538 640M528 658Q533 660 533 668"/>
  </g>
 </g>
</svg>

<!-- three buttons -->
<div class="a" style="left:406px;top:786px;width:53px;height:42px;background:#434343;border-radius:3px"></div>
<div class="a" style="left:462px;top:786px;width:54px;height:42px;background:#4e566b;border-radius:3px"></div>
<div class="a" style="left:519px;top:786px;width:54px;height:42px;background:#434343;border-radius:3px"></div>
<svg style="left:0;top:0" width="800" height="900" viewBox="0 0 800 900">
 <defs>
  <path id="hdface" d="M0 -15C7 -15 11 -10 11 -4C11 2 8 6 5 8L6 14H-6L-5 8C-8 6 -11 2 -11 -4C-11 -10 -7 -15 0 -15Z"/>
 </defs>
 <g transform="translate(432.3 806.5) scale(.94)"><use href="#hdface" fill="#6b6b6b"/><path d="M0 -15V14" stroke="#464646" stroke-width="1.6"/><circle cx="-4" cy="-4" r="1.7" fill="#464646"/><path d="M-2.5 3.5H0" stroke="#464646" stroke-width="1.4"/><path d="M0 -15C7 -15 11 -10 11 -4C11 2 8 6 5 8L6 14H0Z" fill="#5a5a5a"/></g>
 <g transform="translate(489.1 806.5) scale(.94)"><use href="#hdface" fill="#6f7688"/><circle cx="-4.2" cy="-4" r="1.7" fill="#4e566b"/><circle cx="4.2" cy="-4" r="1.7" fill="#4e566b"/><path d="M-2 3.5H2" stroke="#4e566b" stroke-width="1.4"/></g>
 <g transform="translate(546 806.5) scale(.94)"><use href="#hdface" fill="#5a5a5a"/><path d="M0 -15C7 -15 11 -10 11 -4C11 2 8 6 5 8L6 14H0Z" fill="#6b6b6b"/><path d="M0 -15V14" stroke="#464646" stroke-width="1.6"/><circle cx="4" cy="-4" r="1.7" fill="#464646"/><path d="M0 3.5H2.5" stroke="#464646" stroke-width="1.4"/></g>
</svg>

<!-- info -->
<div class="a" style="left:329px;top:895px;width:432px;height:205px;background:#4f4f4f;border:1px solid #353535"></div>
<div class="a" style="left:337px;top:901px;width:46px;height:47px;background:#bdbdbd;border-radius:8px"></div>
<div class="a" style="left:356px;top:907px;width:8px;height:8px;background:#4a4a4a;border-radius:4px"></div>
<div class="a" style="left:356.5px;top:918px;width:7px;height:23px;background:#4a4a4a;border-radius:1.5px"></div>
<span class="t" style="left:387px;top:926px;font-size:17.8px">Rasgos faciales</span>
<span class="t" style="left:345px;top:962px;font-size:17.6px">Seleccione un rasgo facial y ajuste la</span>
<span class="t" style="left:345px;top:986px;font-size:17.6px">apariencia con los controles deslizantes.</span>
<!-- bottom buttons -->
<div class="a" style="left:112px;top:1103px;width:317px;height:31px;background:#535353"></div>
<div class="a" style="left:436px;top:1103px;width:320px;height:31px;background:#535353"></div>
<svg style="left:125px;top:1106px" width="26" height="26" viewBox="0 0 26 26"><g opacity=".55"><path d="M13 2.5A10.5 10.5 0 1 1 3.9 7.8" fill="none" stroke="#9a9a9a" stroke-width="1.6"/><path d="M5.6 5.6A10.5 10.5 0 0 1 10.5 2.8" fill="none" stroke="#9a9a9a" stroke-width="1.6" stroke-dasharray="1.6 2"/><path d="M13 2v10" stroke="#9a9a9a" stroke-width="1.6"/><circle cx="13" cy="13.5" r="3.3" fill="#9a9a9a"/></g></svg>
<span class="t" style="left:167px;top:1119px;font-size:17.4px;color:#8f8f8f">Restaurar a los ajustes iniciales</span>
<span class="t" style="left:440px;top:1119px;font-size:17.4px;color:#979797;transform-origin:0 50%;transform:translateY(-50%) scaleX(.769)">Guardar los ajustes actuales como predeterminados</span>
<!--DIALOG-END-->
<!--HISTORY-START-->
<!-- HISTORY PANEL -->
<div class="a" style="left:1382px;top:271px;width:390px;height:453px;background:#3a3a3a;box-shadow:0 6px 18px rgba(0,0,0,.55)"></div>
<div class="a" style="left:1390px;top:302px;width:374px;height:414px;background:#404040"></div>
<svg style="left:1395px;top:280px" width="70" height="16" viewBox="0 0 70 16"><path d="M0 1.5H15M0 7.5H15M0 13.5H15" stroke="#6e6e6e" stroke-width="1.4"/><path d="M26.5 1.5L38.5 13.5M38.5 1.5L26.5 13.5" stroke="#dcdcdc" stroke-width="1.5"/><path d="M51 13H66" stroke="#dcdcdc" stroke-width="1.6"/></svg>
<span class="t" style="left:1547px;top:287px;font-size:16px;color:#b4b4b4">Historial</span>
<div class="a" style="left:1392px;top:304px;width:360px;height:410px;background:#3c3c3c"></div>
<div class="a" style="left:1392px;top:311.5px;width:360px;height:1.5px;background:#2a2a2a"></div>
<span class="t" style="left:1397px;top:332.8px;font-size:17.7px;color:#e6e6e6">Alternar uso de color de capa</span>
<div class="a" style="left:1392px;top:351.7px;width:360px;height:1.5px;background:#2a2a2a"></div>
<span class="t" style="left:1397px;top:373.0px;font-size:17.7px;color:#e6e6e6">Cambiar la base del modelo de cabeza 3D</span>
<div class="a" style="left:1392px;top:391.9px;width:360px;height:1.5px;background:#2a2a2a"></div>
<span class="t" style="left:1397px;top:413.2px;font-size:17.7px;color:#e6e6e6">Cambiar la base del modelo de cabeza 3D</span>
<div class="a" style="left:1392px;top:432.2px;width:360px;height:1.5px;background:#2a2a2a"></div>
<span class="t" style="left:1397px;top:452.5px;font-size:18.6px;color:#e6e6e6;transform-origin:0 50%;transform:translateY(-50%) scaleX(.806)">Ajustar los rasgos faciales del modelo de cabeza 3D</span>
<div class="a" style="left:1392px;top:472.4px;width:360px;height:1.5px;background:#2a2a2a"></div>
<span class="t" style="left:1397px;top:492.7px;font-size:18.6px;color:#e6e6e6;transform-origin:0 50%;transform:translateY(-50%) scaleX(.806)">Ajustar los rasgos faciales del modelo de cabeza 3D</span>
<div class="a" style="left:1392px;top:512.6px;width:360px;height:1.5px;background:#2a2a2a"></div>
<span class="t" style="left:1397px;top:532.9px;font-size:18.6px;color:#e6e6e6;transform-origin:0 50%;transform:translateY(-50%) scaleX(.806)">Ajustar los rasgos faciales del modelo de cabeza 3D</span>
<div class="a" style="left:1392px;top:552.8px;width:360px;height:1.5px;background:#2a2a2a"></div>
<span class="t" style="left:1397px;top:573.1px;font-size:18.6px;color:#e6e6e6;transform-origin:0 50%;transform:translateY(-50%) scaleX(.806)">Ajustar los rasgos faciales del modelo de cabeza 3D</span>
<div class="a" style="left:1392px;top:593.0px;width:360px;height:1.5px;background:#2a2a2a"></div>
<span class="t" style="left:1397px;top:613.3px;font-size:18.6px;color:#e6e6e6;transform-origin:0 50%;transform:translateY(-50%) scaleX(.806)">Ajustar los rasgos faciales del modelo de cabeza 3D</span>
<div class="a" style="left:1392px;top:633.3px;width:360px;height:1.5px;background:#2a2a2a"></div>
<span class="t" style="left:1397px;top:653.6px;font-size:18.6px;color:#e6e6e6;transform-origin:0 50%;transform:translateY(-50%) scaleX(.806)">Ajustar los rasgos faciales del modelo de cabeza 3D</span>
<div class="a" style="left:1392px;top:673.5px;width:360px;height:1.5px;background:#2a2a2a"></div>
<div class="a" style="left:1392px;top:675px;width:360px;height:38.5px;background:#5f6b89"></div>
<span class="t" style="left:1397px;top:693.8px;font-size:18.6px;color:#dcdce6;transform-origin:0 50%;transform:translateY(-50%) scaleX(.806)">Ajustar los rasgos faciales del modelo de cabeza 3D</span>
<div class="a" style="left:1754px;top:334px;width:6px;height:377px;border-radius:3px;background:#575757"></div>
<!--HISTORY-END-->
<!--NAV-START-->
<!-- NAV BAR -->
<svg style="left:0;top:1290px" width="700" height="67" viewBox="0 1290 700 67">
 <rect x="81" y="1305.5" width="109.5" height="16" fill="#4e4e4e" stroke="#8a8a8a"/>
 <path d="M82 1320.5L184 1306H190V1321H82Z" fill="#303030"/>
 <rect x="137.5" y="1299" width="6.5" height="29" rx="1.5" fill="#6c6c6c" stroke="#8a8a8a"/>
 <rect x="348.5" y="1305.5" width="110" height="16" fill="#4e4e4e" stroke="#8a8a8a"/>
 <path d="M349 1306h3l4 7l-7 3zM388 1321Q398 1318 408 1310Q414 1306 420 1306H432Q438 1306 444 1311Q452 1318 458 1321Z" fill="#303030"/>
 <rect x="400.5" y="1299" width="6.5" height="29" rx="1.5" fill="#6c6c6c" stroke="#8a8a8a"/>
 <path d="M216 1313.5H229.5M262.7 1313.5H276.3M269.5 1306.7V1320.3" stroke="#cfcfcf" stroke-width="1.6" fill="none"/>
 <rect x="311.5" y="1308.3" width="10.2" height="10.2" rx="1" fill="#c2c2c2"/>
 <!-- rotate left -->
 <g fill="none" stroke="#c8c8c8" stroke-width="1.6">
  <path d="M485.5 1313A7.3 7.3 0 1 1 498.5 1317.5"/>
  <path d="M530.5 1317.5A7.3 7.3 0 1 1 543.5 1313"/>
  <path d="M584.5 1305.2A8.2 8.2 0 1 1 577.4 1309.4"/>
  <path d="M578.6 1307.6A8.2 8.2 0 0 1 582.5 1305.5" stroke-dasharray="1.4 1.8"/>
  <path d="M584.5 1305v8"/>
 </g>
 <path d="M482 1311.5h7.5l-3.5 5.5zM547 1311.5h-7.5l3.5 5.5z" fill="#c8c8c8"/>
 <circle cx="584.5" cy="1313.8" r="2.6" fill="#c8c8c8"/>
 <path d="M82.5 1343L89 1337L95.5 1343M82.5 1351L89 1345L95.5 1351" fill="none" stroke="#8a8a8a" stroke-width="1.4"/>
</svg>
<span class="t" style="left:77px;top:1316.5px;font-size:17.5px;letter-spacing:-.7px;color:#ececec">77.0</span>
<span class="t" style="left:350px;top:1316.5px;font-size:17.5px;letter-spacing:-.3px;color:#ececec">0.0</span>
<!--NAV-END-->
<!--TB-START-->
<!-- TOOLBAR ICONS -->
<svg style="left:0;top:0" width="2000" height="130" viewBox="0 0 2000 130" fill="none" stroke-linecap="butt">
<path d="M47.4 16.4L39 19.6Q33.6 21.2 33.3 16.6Q33.4 13 37.5 11.5L45 8.7Q52.2 6.4 55.9 10.6Q59.2 15 55.4 20Q53 23 43.7 26.5L47 31.7" stroke="#3e3e3e" stroke-width="6.6" stroke-linecap="round" stroke-linejoin="miter"/><path d="M47.4 16.4L39 19.6Q33.6 21.2 33.3 16.6Q33.4 13 37.5 11.5L45 8.7Q52.2 6.4 55.9 10.6Q59.2 15 55.4 20Q53 23 43.7 26.5L47 31.7" stroke="#bcbcbc" stroke-width="4.6" stroke-linecap="round" stroke-linejoin="miter"/>
<path d="M4 51L10.5 57.5L4 64M11.5 51L18 57.5L11.5 64" stroke="#858585" stroke-width="1.6"/>
<path d="M27.5 51L34.0 57.5L27.5 64M35.0 51L41.5 57.5L35.0 64" stroke="#858585" stroke-width="1.6"/>
<path d="M51 51L57.5 57.5L51 64M58.5 51L65 57.5L58.5 64" stroke="#858585" stroke-width="1.6"/>
<path d="M183.5 44V92" stroke="#6c6c6c" stroke-width="1.4"/>
<path d="M267 44V92" stroke="#6c6c6c" stroke-width="1.4"/>
<path d="M421.5 44V92" stroke="#6c6c6c" stroke-width="1.4"/>
<path d="M1208.5 44V92" stroke="#6c6c6c" stroke-width="1.4"/>
<path d="M1433 44V92" stroke="#6c6c6c" stroke-width="1.4"/>
<path d="M96 58.5H119M96 67H119M96 75.5H119" stroke="#d2d2d2" stroke-width="3" stroke-linecap="round"/>
<path d="M150.6 62.2L159 53.7L167.4 62.2M150.6 72L159 80.5L167.4 72" stroke="#d2d2d2" stroke-width="1.8"/>
<path d="M222 57.7H219Q217.5 57.7 217 59L210.3 75V78Q210.3 80 212.3 80H238.2Q240.2 80 240.2 78V75L233.5 59Q233 57.7 231.5 57.7H228.6" stroke="#d2d2d2" stroke-width="1.8"/>
<rect x="211.5" y="73.5" width="27.5" height="6" fill="#8c8c8c"/><path d="M210.5 73.3H240" stroke="#d2d2d2" stroke-width="1.4"/>
<path d="M225.2 52V65" stroke="#d2d2d2" stroke-width="1.8"/><path d="M220.6 63.8H229.8L225.2 69z" fill="#d2d2d2"/>
<path d="M304 59.6H312.5A9.3 9.3 0 0 1 312.5 78.2H297" stroke="#d2d2d2" stroke-width="1.8"/><path d="M295 59.6L305.2 53V66.2z" fill="#d2d2d2"/>
<path d="M383 59.6H374.5A9.3 9.3 0 0 0 374.5 78.2H390" stroke="#747474" stroke-width="1.8"/><path d="M391.3 59.6L381.8 53V66.2z" fill="#747474"/>
<path d="M465 80H452.4Q449.5 80 449.5 77V57Q449.5 54.1 452.4 54.1H472.4Q475.4 54.1 475.4 57V70" stroke="#d2d2d2" stroke-width="1.8"/>
<path d="M450.5 71.5L458 79.2H450.5z" fill="#909090"/><path d="M450 71L458.5 79.7" stroke="#d2d2d2" stroke-width="1.3"/>
<circle cx="473.4" cy="78.3" r="7.6" fill="#b4b4b4"/><path d="M473.4 72.8V83.8M467.9 78.3H478.9" stroke="#4e4e4e" stroke-width="1.8"/>
<rect x="519.5" y="54.1" width="26" height="26" rx="3.5" stroke="#d2d2d2" stroke-width="1.8" stroke-dasharray="3.6 2.6"/>
<path d="M549.5 74.5V83.3H540.5z" fill="#c4c4c4"/>
<rect x="597" y="61" width="20.5" height="20.3" rx="3" stroke="#d2d2d2" stroke-width="1.8"/>
<rect x="588.6" y="52.8" width="20.3" height="20.2" rx="3" fill="#8a8a8a" stroke="#d2d2d2" stroke-width="1.8"/>
<path d="M662.3 59.3H684.4V79.6H662.3zM673.4 59.3V52.8" stroke="#747474" stroke-width="1.5"/>
<circle cx="662.3" cy="59.3" r="2.1" fill="#747474"/>
<circle cx="673.4" cy="59.3" r="2.1" fill="#747474"/>
<circle cx="684.4" cy="59.3" r="2.1" fill="#747474"/>
<circle cx="662.3" cy="69.4" r="2.1" fill="#747474"/>
<circle cx="684.4" cy="69.4" r="2.1" fill="#747474"/>
<circle cx="662.3" cy="79.6" r="2.1" fill="#747474"/>
<circle cx="673.4" cy="79.6" r="2.1" fill="#747474"/>
<circle cx="684.4" cy="79.6" r="2.1" fill="#747474"/>
<circle cx="673.4" cy="52.6" r="2.1" fill="#747474"/>
<rect x="729.2" y="52.5" width="29.2" height="29" rx="6.5" stroke="#d2d2d2" stroke-width="1.8"/>
<path d="M737.8 52.5V81.5M729.2 60.9H758.4M729.2 72.8H758.4M744.3 52.5C744.8 57 749.6 58.6 751.4 60.9C754 64.3 754 69.4 751.4 72.8C749.6 75.1 744.8 76.7 744.3 81.5" stroke="#d2d2d2" stroke-width="1.7"/>
<path d="M822.89 69.38L828.49 70.88M820.51 73.51L824.61 77.61M816.38 75.89L817.88 81.49M811.62 75.89L810.12 81.49M807.49 73.51L803.39 77.61M805.11 69.38L799.51 70.88M805.11 64.62L799.51 63.12M807.49 60.49L803.39 56.39M811.62 58.11L810.12 52.51M816.38 58.11L817.88 52.51M820.51 60.49L824.61 56.39M822.89 64.62L828.49 63.12" stroke="#d2d2d2" stroke-width="2.1" stroke-linecap="round"/>
<defs><pattern id="hat" width="3" height="3" patternUnits="userSpaceOnUse" patternTransform="rotate(-45)"><rect width="3" height="3" fill="#6a6a6a"/><rect width="3" height="1.6" fill="#cfcfcf"/></pattern></defs>
<rect x="871.3" y="53.7" width="26.4" height="26.4" rx="4" fill="url(#hat)" stroke="#d2d2d2" stroke-width="1.8"/>

<path d="M889.5 71.5H905V86H886.5V78H889.5z" fill="#4e4e4e"/>
<circle cx="884.4" cy="66.7" r="5.8" fill="#4e4e4e" stroke="#d2d2d2" stroke-width="1.8"/><path d="M890.5 74.6H898M892 81.3H901" stroke="#d2d2d2" stroke-width="1.8"/><path d="M897 70.6L903 74.6L897 78.6zM893.5 77.3L887.5 81.3L893.5 85.3z" fill="#d2d2d2"/>
<rect x="941.2" y="53.6" width="27" height="27" rx="4" fill="#c2c2c2"/><circle cx="954.7" cy="67.1" r="7.6" fill="#4e4e4e"/>
<rect x="1012" y="54.1" width="26" height="26" rx="3" stroke="#747474" stroke-width="1.5" stroke-dasharray="3.4 2.6"/><path d="M1010.6 52.6L1040 82.3" stroke="#747474" stroke-width="1.5"/>
<rect x="1082.6" y="54.1" width="19.4" height="19.2" rx="2.5" stroke="#747474" stroke-width="1.5" stroke-dasharray="3.2 2.4"/>
<path d="M1103.99 62.65L1107.93 59.57M1105.79 66.52L1110.68 65.49M1105.72 70.80L1110.57 72.01M1103.56 74.86L1107.28 78.20M1100.06 77.31L1101.93 81.94M1094.85 77.86L1093.98 82.78M1090.65 75.99L1087.57 79.93" stroke="#747474" stroke-width="1.4"/>
<path d="M1153.5 53.6H1179.5Q1182.5 53.6 1180.4 55.8L1154.6 81.4Q1152 83.8 1152 80.5V55.1Q1152 53.6 1153.5 53.6zM1157.8 59.1V71.6L1170.5 59.1z" fill="#c2c2c2" fill-rule="evenodd"/>
<circle cx="1237.8" cy="55.1" r="2.4" fill="#d2d2d2"/>
<circle cx="1249.6" cy="55.1" r="2.4" fill="#d2d2d2"/>
<circle cx="1261.5" cy="55.1" r="2.4" fill="#d2d2d2"/>
<circle cx="1243.7" cy="61" r="2.4" fill="#d2d2d2"/>
<circle cx="1255.6" cy="61" r="2.4" fill="#d2d2d2"/>
<circle cx="1237.8" cy="67" r="2.4" fill="#d2d2d2"/>
<circle cx="1249.6" cy="67" r="2.4" fill="#d2d2d2"/>
<circle cx="1261.5" cy="67" r="2.4" fill="#d2d2d2"/>
<circle cx="1243.7" cy="72.9" r="2.4" fill="#d2d2d2"/>
<circle cx="1237.8" cy="78.9" r="2.4" fill="#d2d2d2"/>
<circle cx="1249.6" cy="78.9" r="2.4" fill="#d2d2d2"/>
<circle cx="1260.6" cy="78.3" r="8.6" fill="#4e4e4e"/><circle cx="1260.6" cy="78.3" r="7.6" fill="#b4b4b4"/><path d="M1260.6 72.8V83.8M1255.1 78.3H1266.1" stroke="#4e4e4e" stroke-width="1.8"/>
<path d="M1313 54.1H1329.5Q1333 54.1 1333 57.6V64M1307 72V76.5Q1307 80 1310.5 80H1317" stroke="#d2d2d2" stroke-width="1.8" stroke-dasharray="3.4 2.6"/>
<path d="M1311 54.1Q1307 54.1 1307 58V63Q1307 69 1313 69H1315" stroke="#d2d2d2" stroke-width="1.8"/><path d="M1313.5 64.5L1319 69L1313.5 73.5z" fill="#d2d2d2"/>
<path d="M1320 70.5Q1320 67.6 1322 67.6H1326L1328 69.8H1333.5Q1335 69.8 1335 71.5V80.5Q1335 82 1333.5 82H1321.5Q1320 82 1320 80.5z" fill="#c2c2c2"/><path d="M1320 72.6H1335" stroke="#4e4e4e" stroke-width="1"/>
<path d="M1395 54.1H1400Q1403.5 54.1 1403.5 57.6V76.5Q1403.5 80 1400 80H1380.5Q1377 80 1377 76.5V69" stroke="#747474" stroke-width="1.5" stroke-dasharray="3.2 2.4"/>
<path d="M1375.3 54.5Q1375.3 52.7 1377 52.7H1382L1384 55H1389Q1390.5 55 1390.5 56.5V58.5H1393.5L1390 66.4H1375.3z" fill="#747474"/>
<path d="M1386 66V68Q1386 72.6 1391 72.6H1396" stroke="#747474" stroke-width="1.5"/><path d="M1395 68.6L1400.5 72.6L1395 76.6z" fill="#747474"/>
<path d="M1459.6 60.4L1470.2 67.1L1459.6 73.8z" stroke="#d2d2d2" stroke-width="1.6" stroke-linejoin="round"/><path d="M1474 53V81" stroke="#d2d2d2" stroke-width="1.8"/><path d="M1488.8 59.5L1477.2 67.1L1488.8 74.7z" fill="#d2d2d2" stroke="#d2d2d2" stroke-width="1" stroke-linejoin="round"/>
<rect x="1540" y="63" width="18.6" height="18.4" rx="2.5" stroke="#d2d2d2" stroke-width="1.8"/>
<rect x="1531.6" y="53" width="19" height="18.6" rx="2.5" fill="#4e4e4e" stroke="#d2d2d2" stroke-width="1.8"/><path d="M1531.6 54.3H1550.6" stroke="#d2d2d2" stroke-width="2.6"/>
<path d="M1537.5 60.7L1553 75.7" stroke="#d2d2d2" stroke-width="1.8"/><path d="M1535.6 58.8H1541.8L1535.6 65zM1555 77.6H1548.8L1555 71.4z" fill="#d2d2d2"/>
<circle cx="1606.65" cy="54.03" r="1.25" fill="#d2d2d2"/><circle cx="1602.63" cy="57.23" r="1.25" fill="#d2d2d2"/><circle cx="1600.47" cy="62.09" r="1.25" fill="#d2d2d2"/><circle cx="1600.84" cy="67.40" r="1.25" fill="#d2d2d2"/><circle cx="1603.52" cy="71.78" r="1.25" fill="#d2d2d2"/><circle cx="1607.90" cy="74.46" r="1.25" fill="#d2d2d2"/><circle cx="1613.21" cy="74.83" r="1.25" fill="#d2d2d2"/>
<path d="M1613 53Q1622 54 1624.6 62.5" stroke="#d2d2d2" stroke-width="1.8"/><path d="M1619.6 60.8H1629.4L1624.8 67.2z" fill="#d2d2d2"/>
<path d="M1624.8 69A8 8 0 1 1 1617.9 73" stroke="#d2d2d2" stroke-width="1.7"/><path d="M1619 71.3A8 8 0 0 1 1622.8 69.3" stroke="#d2d2d2" stroke-width="1.7" stroke-dasharray="1.3 1.7"/><path d="M1624.8 68.8V77" stroke="#d2d2d2" stroke-width="1.6"/><circle cx="1624.8" cy="77.2" r="2.6" fill="#d2d2d2"/>
<path d="M1675.2 53.6Q1676 51.8 1677.8 53.6L1691 74L1687 76.4z" fill="#d2d2d2"/><path d="M1694.8 53.6Q1694 51.8 1692.2 53.6L1679 74L1683 76.4z" fill="#d2d2d2"/>
<circle cx="1677.6" cy="77.2" r="3.7" stroke="#d2d2d2" stroke-width="2"/><circle cx="1692.4" cy="77.2" r="3.7" stroke="#d2d2d2" stroke-width="2"/>
<path d="M1748 58.5H1746.5Q1744.3 58.5 1744.3 60.7V77Q1744.3 79.2 1746.5 79.2H1752M1763.5 58.5H1764.8Q1767 58.5 1767 60.7V64" stroke="#747474" stroke-width="1.5"/>
<path d="M1747 62V57.5Q1747 55.4 1749 55.4H1752.3A3.2 3.2 0 0 1 1758.5 55.4H1761.8Q1763.8 55.4 1763.8 57.5V62zM1755.4 53.3A1.5 1.5 0 1 0 1755.4 56.3A1.5 1.5 0 1 0 1755.4 53.3z" fill="#747474" fill-rule="evenodd"/>
<rect x="1753.8" y="65.8" width="15" height="16.2" rx="2.2" fill="#747474"/><path d="M1757 70.5H1765.6M1757 74H1765.6M1757 77.5H1765.6" stroke="#4e4e4e" stroke-width="1.4"/>
<circle cx="88" cy="111" r="3.6" fill="#c6c6c6"/>
<path d="M1967.5 104.5L1977 113.5L1986.5 104.5" stroke="#d8d8d8" stroke-width="1.7"/>
</svg>
<!--TB-END-->
<!--M3D-START-->
<!-- 3D MANIPULATOR ICONS -->
<svg style="left:0;top:0" width="1300" height="380" viewBox="0 0 1300 380" fill="none">
<path d="M839.5 330.5L837 328.8Q824 330 821.5 343L818.5 343.5L824.5 351.5L830.5 343L828 343Q829 334 837 333.5z" fill="#88bee5"/>
<path d="M819 350Q817 363 834 363.5L840 363L839.5 365.5L848.5 357L839 354.5L839.5 357Q828 359 822.5 350.5z" fill="#88bee5"/>
<path d="M833 338L840 344.75L833 351.5zM839.5 338H848.5V351.5H839.5z" fill="#4f9fd8"/>
<path d="M874.5 328.5L881 334.6H877.2V338H871.8V334.6H868zM874.5 365L881 358.9H877.2V355.5H871.8V358.9H868zM856.5 346.5L862.6 340.5V344H864.5V349H862.6V352.5zM893 346.5L886.9 340.5V344H883.5V349H886.9V352.5z" fill="#88bee5"/>
<path d="M866.5 340L873.5 346.75L866.5 353.5zM873.0 340H882.0V353.5H873.0z" fill="#4f9fd8"/>
<path d="M905.5 331L911.5 338.5H909L913 348.5L905.5 362L898 348.5L902 338.5H899.5z" fill="#88bee5"/>
<path d="M914 338L921 344.75L914 351.5zM920.5 338H929.5V351.5H920.5z" fill="#4f9fd8"/>
<path d="M959.5 330L965 335.4H954zM959.5 363L965 357.6H954zM943.5 346.5L948.9 341V352zM976 346.5L970.6 341V352z" fill="#88bee5"/><path d="M959.5 334V359M947 346.5H972" stroke="#88bee5" stroke-width="3"/>
<path d="M959.5 336.9L968.4 341.7L968.4 351.3L959.5 356.1L950.6 351.3L950.6 341.7z" stroke="#4f9fd8" stroke-width="1.5" stroke-linejoin="round" fill="#fff"/><path d="M950.6 341.7L959.5 346.5L968.4 341.7M959.5 346.5V356.1" stroke="#4f9fd8" stroke-width="1.5" stroke-linejoin="round" fill="none"/>
<path d="M1003.0 335.9L1012.9 341.2L1012.9 351.8L1003.0 357.1L993.1 351.8L993.1 341.2z" stroke="#4f9fd8" stroke-width="1.4" stroke-linejoin="round" fill="#fff"/><path d="M993.1 341.2L1003.0 346.5L1012.9 341.2M1003.0 346.5V357.1" stroke="#4f9fd8" stroke-width="1.4" stroke-linejoin="round" fill="none"/>
<path d="M1001 330Q989 332 988.5 343.5L985.5 343.5L991.5 352L996 343.5H993.8Q995 335 1003.5 333.5L1003 336L1009 333L1003.5 329.5L1003.7 331.2z" fill="#88bee5"/>
<path d="M988.5 351.5Q988 360.5 1004 360L1004 363L1013.5 357.5L1004.5 352.5V355.5Q993 356.5 991.5 351z" fill="#88bee5"/>
<path d="M1023.4 342.5L1024 332.5L1026.6 334.8Q1039 326 1052 334.8L1054.6 332.5L1055.4 342.5L1045.8 340.6L1048.6 338Q1039 332 1029.8 338L1032.8 340.6z" fill="#88bee5"/>
<path d="M1039.0 338.4L1050.2 344.4L1050.2 356.4L1039.0 362.4L1027.8 356.4L1027.8 344.4z" stroke="#4f9fd8" stroke-width="1.5" stroke-linejoin="round" fill="#fff"/><path d="M1027.8 344.4L1039.0 350.4L1050.2 344.4M1039.0 350.4V362.4" stroke="#4f9fd8" stroke-width="1.5" stroke-linejoin="round" fill="none"/>
<path d="M1063.3 353.8L1079.6 363.3L1096 353.8L1079.6 344.3z" stroke="#4f9fd8" stroke-width="1.3" fill="none"/>
<path d="M1080 333.2L1079.6 330.3L1086.5 334.5L1080.5 339L1080.3 336.4Q1070 337 1069.5 346Q1070 352 1079.6 353Q1088.5 352.5 1090 347L1087.6 346.6L1092.5 340L1093.5 348L1091.5 347.5Q1090 356 1079.6 356.5Q1067 356 1066.5 346Q1067 334 1080 333.2z" fill="#88bee5"/>
<path d="M1079.6 339.3L1087.2 343.4L1087.2 351.6L1079.6 355.7L1072.0 351.6L1072.0 343.4z" stroke="#4f9fd8" stroke-width="1.4" stroke-linejoin="round" fill="#fff"/><path d="M1072.0 343.4L1079.6 347.5L1087.2 343.4M1079.6 347.5V355.7" stroke="#4f9fd8" stroke-width="1.4" stroke-linejoin="round" fill="none"/>
<path d="M1103.3 353.8L1119.6 363.3L1135.9 353.8L1119.6 344.3z" stroke="#4f9fd8" stroke-width="1.3" fill="none"/>
<path d="M1106 341.5L1130 331.5M1110 331.5L1134 341.5" stroke="#88bee5" stroke-width="2.4"/><path d="M1104 343.5L1106.5 338L1109.5 343zM1131.8 329.6L1126 330.5L1128.5 334.5zM1108 329.6L1113.8 330.5L1111.3 334.5zM1135.8 343.5L1133.3 338L1130.3 343z" fill="#88bee5" stroke="#88bee5" stroke-width="1.2" stroke-linejoin="round"/>
<path d="M1119.6 339.5L1128.2 344.2L1128.2 353.4L1119.6 358.1L1111.0 353.4L1111.0 344.2z" stroke="#4f9fd8" stroke-width="1.4" stroke-linejoin="round" fill="#fff"/><path d="M1111.0 344.2L1119.6 348.8L1128.2 344.2M1119.6 348.8V358.1" stroke="#4f9fd8" stroke-width="1.4" stroke-linejoin="round" fill="none"/>
<g transform="translate(1177 342) rotate(45)"><path d="M-10.5 13.5V0A10.5 10.5 0 0 1 10.5 0V13.5H5.3V0A5.3 5.3 0 0 0 -5.3 0V13.5z" stroke="#4f9fd8" stroke-width="1.4" fill="#fff"/><path d="M-10.5 9H-5.3V13.5H-10.5zM5.3 9H10.5V13.5H5.3z" fill="#4f9fd8" stroke="#4f9fd8" stroke-width="1.4"/></g>
</svg>
<!--M3D-END-->
</body>
</html>
